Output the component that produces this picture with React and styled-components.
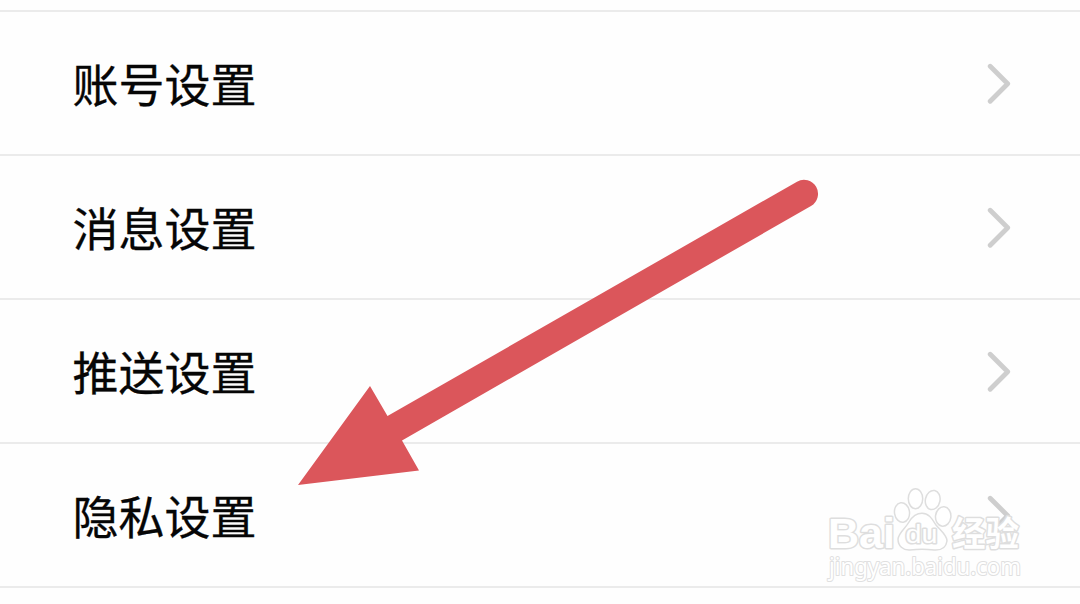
import styled, { createGlobalStyle } from "styled-components"

const GlobalStyle = createGlobalStyle`
    body {
        margin: 0;
        background: #fefefe;
        overflow: hidden;
    }
`

const Page = styled.div`
    position: relative;
    box-sizing: border-box;
    width: 1080px;
    height: 604px;
    padding-top: 10px;
    overflow: hidden;
    background: #fefefe;
    font-family: "Noto Sans CJK SC", sans-serif;
`

const SettingsList = styled.div`
    display: flex;
    flex-direction: column;
    border-top: 2px solid #ebebeb;
`

const SettingsRow = styled.div`
    display: flex;
    box-sizing: border-box;
    height: 144px;
    padding: 0 68px 0 72.5px;
    justify-content: space-between;
    align-items: center;
    border-bottom: 2px solid #ebebeb;
`

const RowLabel = styled.span`
    color: #060606;
    font-size: 46px;
    line-height: 66px;
    padding-bottom: 2px;
    -webkit-text-stroke: 0.3px #060606;
`

const Chevron = styled.svg`
    width: 26px;
    height: 42px;
    margin-top: 1px;
    fill: none;
    stroke: #cecece;
    stroke-width: 4.8;
    stroke-linecap: round;
    stroke-linejoin: round;
`

const PointerArrow = styled.svg`
    position: absolute;
    left: 290px;
    top: 170px;
    width: 540px;
    height: 325px;
    fill: #db565b;
`

const Watermark = styled.svg`
    position: absolute;
    left: 820px;
    top: 480px;
    width: 210px;
    height: 110px;
    fill: #ffffff;
    stroke: #dedede;
    stroke-width: 1.5;
    stroke-linejoin: round;
`

const LogoText = styled.text`
    font-family: "Liberation Sans", "Noto Sans CJK SC", sans-serif;
    font-weight: ${({$bold}) => $bold ? 700 : 400};
    paint-order: stroke;
    stroke-width: 3;
`

const SiteText = styled.text`
    font-family: "Noto Sans", sans-serif;
    font-size: 23px;
    paint-order: stroke;
    stroke: #e0e0e0;
    stroke-width: 2;
`

const settings = ["账号设置", "消息设置", "推送设置", "隐私设置"]

const SettingsItem = ({label}) => {
    return (
        <SettingsRow>
            <RowLabel>{label}</RowLabel>
            <Chevron viewBox="0 0 26 42">
                <path d="M4.2 3.2 L21.7 20.7 L4.2 38.2"/>
            </Chevron>
        </SettingsRow>
    )
}

const BaiduWatermark = () => {
    return (
        <Watermark viewBox="820 480 210 110">
            <LogoText $bold x="828" y="547.5" fontSize="43" textLength="67" lengthAdjust="spacingAndGlyphs">Bai</LogoText>
            <ellipse cx="902" cy="512.5" rx="7.5" ry="9.8" transform="rotate(-8 902 512.5)"/>
            <ellipse cx="915.5" cy="498.7" rx="7.2" ry="10"/>
            <ellipse cx="932.7" cy="500" rx="7.3" ry="9.7" transform="rotate(12 932.7 500)"/>
            <ellipse cx="943.2" cy="516.5" rx="7.7" ry="9.7" transform="rotate(6 943.2 516.5)"/>
            <path d="M922 513.3 C929 513.3 932 519 936 525 C941 531 947 535 947 541 C946 548 941 550.5 934 550 C926 549 918 549 910 550 C903 550.5 898 546 898 539 C899 532 905 529 909 522 C912 517 916 513.3 922 513.3 Z"/>
            <LogoText x="905.5" y="543" fontSize="26" textLength="32" lengthAdjust="spacingAndGlyphs">du</LogoText>
            <LogoText $bold x="952" y="545.5" fontSize="34" textLength="67" lengthAdjust="spacingAndGlyphs">经验</LogoText>
            <SiteText x="829" y="574.5" textLength="192" lengthAdjust="spacingAndGlyphs">jingyan.baidu.com</SiteText>
        </Watermark>
    )
}

const App = () => {
    return (
        <>
            <GlobalStyle/>
            <Page>
                <SettingsList>
                    {settings.map((label) => <SettingsItem key={label} label={label}/>)}
                </SettingsList>
                <PointerArrow viewBox="290 170 540 325">
                    <path d="M298 485 L370 386 L387.5 416 L797 181.7 A14 14 0 0 1 811 206 L402 440.5 L419 470.5 Z"/>
                </PointerArrow>
                <BaiduWatermark/>
            </Page>
        </>
    )
}

export default App
